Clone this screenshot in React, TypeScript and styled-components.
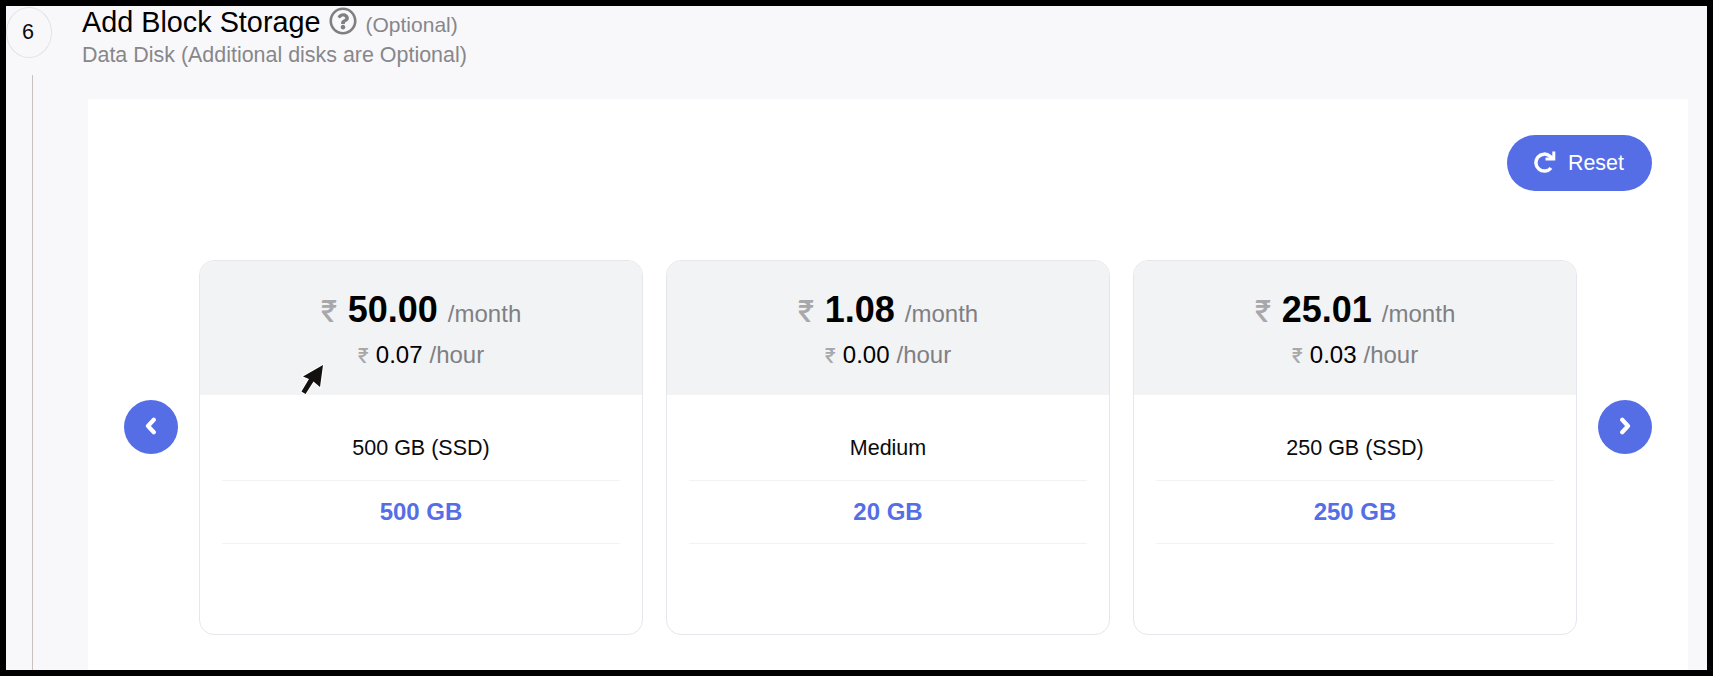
import React from 'react';
import styled, { createGlobalStyle } from 'styled-components';
import { FaRegQuestionCircle } from 'react-icons/fa';

const GlobalStyle = createGlobalStyle`
  * { box-sizing: border-box; }
  body { margin: 0; background: #000; font-family: "Liberation Sans", Arial, sans-serif; color: #0b0b0c; }
`;

const Frame = styled.div`
  display: flex;
  width: 1713px;
  height: 676px;
  border: 6px solid #000;
  background: #f8f8fb;
  overflow: hidden;
`;

const Rail = styled.aside`
  width: 76px;
  flex: none;
  display: flex;
  flex-direction: column;
  align-items: flex-start;
`;

const StepNumber = styled.div`
  width: 46px;
  height: 51px;
  margin-top: 1px;
  border: 1px solid #e2e2e5;
  border-radius: 50%;
  display: flex;
  align-items: center;
  justify-content: center;
  padding: 0 2px 2px 0;
  font-size: 21.6px;
`;

const RailLine = styled.div`
  flex: 1;
  width: 1px;
  margin: 17px 0 0 26px;
  background: #c9c1bc;
`;

const Main = styled.main`
  flex: 1;
  display: flex;
  flex-direction: column;
`;

const Header = styled.header`
  height: 93px;
  flex: none;
`;

const TitleRow = styled.div`
  display: flex;
  align-items: baseline;
  height: 35px;
  line-height: 32px;
`;

const Title = styled.h2`
  margin: 0;
  font-size: 28.8px;
  font-weight: 400;
  color: #000;
`;

const HelpIcon = styled(FaRegQuestionCircle)`
  width: 28px;
  height: 28px;
  margin: 1px 9px 0 8px;
  align-self: flex-start;
  color: #808080;
`;

const Optional = styled.span`
  font-size: 21px;
  color: #87878a;
`;

const Subtitle = styled.p`
  margin: 0;
  font-size: 21.45px;
  line-height: 28px;
  color: #87878a;
`;

const Panel = styled.section`
  flex: 1;
  width: 1600px;
  margin-left: 6px;
  padding: 36px 36px 0;
  background: #fff;
`;

const Toolbar = styled.div`
  display: flex;
  justify-content: flex-end;
  margin-bottom: 69px;
`;

const ResetButton = styled.button`
  display: flex;
  align-items: center;
  width: 145px;
  height: 56px;
  padding: 0 0 0 27px;
  gap: 12px;
  border: 0;
  border-radius: 28px;
  background: #556ee6;
  color: #fff;
  font: 21.4px "Liberation Sans", Arial, sans-serif;
`;

const RedoIcon = styled.svg`
  width: 22px;
  height: 22px;
  margin-bottom: 2px;
  fill: none;
  stroke: #fff;
  stroke-width: 3.5;
`;

const Carousel = styled.div`
  display: flex;
  gap: 21px;
`;

const ArrowButton = styled.button`
  width: 54px;
  height: 54px;
  flex: none;
  margin-top: 140px;
  padding: 0 0 2px;
  display: flex;
  align-items: center;
  justify-content: center;
  border: 0;
  border-radius: 50%;
  background: #556ee6;
`;

const ChevronIcon = styled.svg`
  width: 12px;
  height: 18px;
  fill: none;
  stroke: #fff;
  stroke-width: 4.2;
  stroke-linejoin: round;
  stroke-linecap: round;
`;

const Cards = styled.div`
  flex: 1;
  display: grid;
  grid-template-columns: repeat(3, 444px);
  column-gap: 23px;
`;

const Card = styled.article`
  height: 375px;
  border: 1px solid #e6e7ec;
  border-radius: 15px;
  overflow: hidden;
  background: #fff;
`;

const PriceBlock = styled.div`
  height: 134px;
  padding-top: 26px;
  background: #f2f3f5;
`;

const PriceLine = styled.div<{ $large?: boolean }>`
  display: flex;
  align-items: baseline;
  justify-content: center;
  height: ${p => (p.$large ? 50 : 40)}px;
  line-height: ${p => (p.$large ? 46 : 36)}px;
  font-size: 24px;
`;

const Currency = styled.span<{ $large?: boolean }>`
  width: ${p => (p.$large ? 15 : 10)}px;
  margin-right: ${p => (p.$large ? 12 : 8)}px;
  font-family: Inter, sans-serif;
  font-size: ${p => (p.$large ? 30 : 20)}px;
  font-weight: 500;
  line-height: 1;
  color: #a8a8aa;
`;

const Amount = styled.span<{ $large?: boolean }>`
  font-size: ${p => (p.$large ? 36 : 24)}px;
  font-weight: ${p => (p.$large ? 700 : 400)};
  color: #000;
  margin-right: ${p => (p.$large ? 10 : 7)}px;
`;

const Period = styled.span`
  color: #808083;
`;

const Details = styled.div`
  padding: 21px 22px 0;
  text-align: center;
`;

const Row = styled.div<{ $strong?: boolean }>`
  height: ${p => (p.$strong ? 63 : 65)}px;
  line-height: ${p => (p.$strong ? 62 : 64)}px;
  border-bottom: 1px solid #f1f2f4;
  font-size: ${p => (p.$strong ? 24 : 21.5)}px;
  font-weight: ${p => (p.$strong ? 700 : 400)};
  color: ${p => (p.$strong ? '#556ee6' : '#0b0b0c')};
`;

const Pointer = styled.svg`
  position: absolute;
  left: 299px;
  top: 363px;
  width: 26px;
  height: 33px;
`;

const plans = [
  { month: '50.00', hour: '0.07', name: '500 GB (SSD)', size: '500 GB' },
  { month: '1.08', hour: '0.00', name: 'Medium', size: '20 GB' },
  { month: '25.01', hour: '0.03', name: '250 GB (SSD)', size: '250 GB' },
];

const Chevron = ({ right }: { right?: boolean }) => (
  <ChevronIcon viewBox="0 0 12 18">
    <path d={right ? 'M3.2 2.8 9 9 3.2 15.2' : 'M8.8 2.8 3 9 8.8 15.2'} />
  </ChevronIcon>
);

export default function App() {
  return (
    <>
      <GlobalStyle />
      <Frame>
        <Rail>
          <StepNumber>6</StepNumber>
          <RailLine />
        </Rail>
        <Main>
          <Header>
            <TitleRow>
              <Title>Add Block Storage</Title>
              <HelpIcon />
              <Optional>(Optional)</Optional>
            </TitleRow>
            <Subtitle>Data Disk (Additional disks are Optional)</Subtitle>
          </Header>
          <Panel>
            <Toolbar>
              <ResetButton>
                <RedoIcon viewBox="0 0 22 22">
                  <path d="M17 17A8.5 8.5 0 1 1 16 5.2L18.8 8" />
                  <path d="M11.5 8.1H19.8V.4" strokeWidth="3" />
                </RedoIcon>
                Reset
              </ResetButton>
            </Toolbar>
            <Carousel>
              <ArrowButton aria-label="Previous"><Chevron /></ArrowButton>
              <Cards>
                {plans.map(plan => (
                  <Card key={plan.name}>
                    <PriceBlock>
                      <PriceLine $large>
                        <Currency $large>₹</Currency>
                        <Amount $large>{plan.month}</Amount>
                        <Period>/month</Period>
                      </PriceLine>
                      <PriceLine>
                        <Currency>₹</Currency>
                        <Amount>{plan.hour}</Amount>
                        <Period>/hour</Period>
                      </PriceLine>
                    </PriceBlock>
                    <Details>
                      <Row>{plan.name}</Row>
                      <Row $strong>{plan.size}</Row>
                    </Details>
                  </Card>
                ))}
              </Cards>
              <ArrowButton aria-label="Next"><Chevron right /></ArrowButton>
            </Carousel>
          </Panel>
        </Main>
      </Frame>
      <Pointer viewBox="0 0 26 33">
        <path d="M24 2 4 13.5 10 16 2.5 28.5 6.5 31 14.5 18.5 21 24Z" fill="#12110f" stroke="#fff" strokeWidth="2" paintOrder="stroke" />
      </Pointer>
    </>
  );
}
